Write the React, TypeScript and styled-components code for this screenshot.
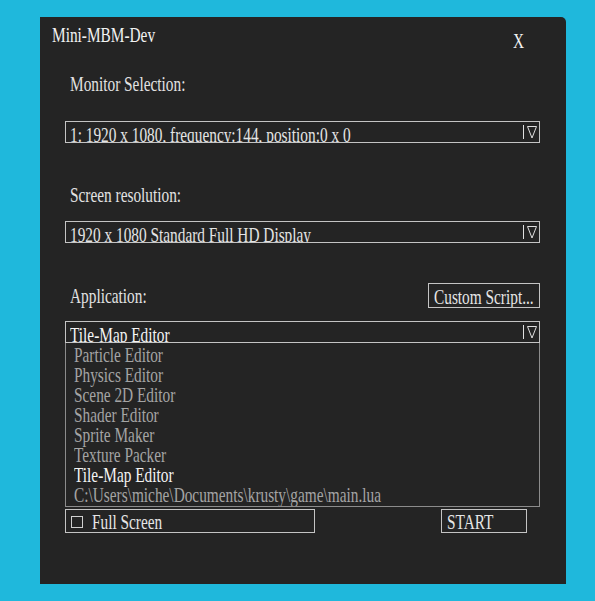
import styled, { createGlobalStyle } from 'styled-components'

const apps = [
  'Particle Editor',
  'Physics Editor',
  'Scene 2D Editor',
  'Shader Editor',
  'Sprite Maker',
  'Texture Packer',
  'Tile-Map Editor',
  'C:\\Users\\miche\\Documents\\krusty\\game\\main.lua',
]
const selectedApp = 'Tile-Map Editor'

const serif = `"Liberation Serif", "Times New Roman", Times, "DejaVu Serif", serif`

function DropArrow() {
  return (
    <Arrow width="15" height="15" viewBox="0 0 15 15">
      <line x1="0.5" y1="0" x2="0.5" y2="14" stroke="#e0e0e0" strokeWidth="1" />
      <polygon points="4.5,1.5 13.5,1.5 9,13" fill="none" stroke="#e0e0e0" strokeWidth="1" />
    </Arrow>
  )
}

export default function App() {
  return (
    <>
      <GlobalStyle />
      <Page>
        <Window>
          <Header>
            <Title>
              <Narrow>Mini-MBM-Dev</Narrow>
            </Title>
            <Close>
              <Narrow>X</Narrow>
            </Close>
          </Header>

          <Body>
            <Label $top={21}>
              <Narrow>Monitor Selection:</Narrow>
            </Label>
            <Select $top={26}>
              <SelectText>
                <Narrow>1: 1920 x 1080, frequency:144, position:0 x 0</Narrow>
              </SelectText>
              <DropArrow />
            </Select>

            <Label $top={41}>
              <Narrow>Screen resolution:</Narrow>
            </Label>
            <Select $top={15}>
              <SelectText>
                <Narrow>1920 x 1080 Standard Full HD Display</Narrow>
              </SelectText>
              <DropArrow />
            </Select>

            <AppRow>
              <Label $top={2}>
                <Narrow>Application:</Narrow>
              </Label>
              <Button $width={112}>
                <Narrow>Custom Script...</Narrow>
              </Button>
            </AppRow>
            <Select $top={13}>
              <SelectText $bright>
                <Narrow>{selectedApp}</Narrow>
              </SelectText>
              <DropArrow />
            </Select>
            <List>
              {apps.map((a) => (
                <Item key={a} $selected={a === selectedApp}>
                  <Narrow>{a}</Narrow>
                </Item>
              ))}
            </List>

            <Footer>
              <Toggle>
                <Check />
                <Narrow>Full Screen</Narrow>
              </Toggle>
              <Start>
                <Narrow>START</Narrow>
              </Start>
            </Footer>
          </Body>
        </Window>
      </Page>
    </>
  )
}

const GlobalStyle = createGlobalStyle`
  html, body {
    margin: 0;
    padding: 0;
    background: #1fb8dc;
  }
  body {
    font-family: ${serif};
    font-size: 21px;
    line-height: 22px;
  }
`

const Page = styled.div`
  height: 601px;
  padding: 17px 0 0 40px;
  box-sizing: border-box;
`

const Window = styled.div`
  width: 526px;
  height: 567px;
  background: #242424;
  border-radius: 0 5px 0 0;
  color: #e6e6e6;
  font-family: ${serif};
  display: flex;
  flex-direction: column;
`

// condensed look of the old bitmap UI font
const Narrow = styled.span`
  display: inline-block;
  white-space: nowrap;
  font-family: ${serif};
  transform: scaleX(0.73);
  transform-origin: left center;
`

const Header = styled.div`
  height: 35px;
  box-sizing: border-box;
  padding: 7px 38px 0 12px;
  display: flex;
  justify-content: space-between;
  align-items: flex-start;
`

const Title = styled.div`
  color: #f2f2f2;
`

const Close = styled.div`
  width: 15px;
  margin-top: 6px;
  color: #f2f2f2;
`

const Body = styled.div`
  padding: 0 26px 0 25px;
  display: flex;
  flex-direction: column;
`

const Label = styled.div<{ $top: number }>`
  margin-top: ${(p) => p.$top}px;
  padding-left: 5px;
  height: 22px;
  color: #e2e2e2;
`

const Select = styled.div<{ $top: number }>`
  margin-top: ${(p) => p.$top}px;
  height: 22px;
  box-sizing: border-box;
  border: 1px solid #c4c4c4;
  display: flex;
  align-items: flex-start;
  overflow: hidden;
`

const SelectText = styled.div<{ $bright?: boolean }>`
  flex: 1;
  height: 20px;
  padding: 2px 0 0 4px;
  box-sizing: border-box;
  overflow: hidden;
  color: ${(p) => (p.$bright ? '#f4f4f4' : '#e4e4e4')};
`

const Arrow = styled.svg`
  flex: none;
  margin: 3px 1px 0 0;
`

const AppRow = styled.div`
  margin-top: 40px;
  height: 25px;
  display: flex;
  justify-content: space-between;
  align-items: flex-start;
`

const Button = styled.div<{ $width: number }>`
  width: ${(p) => p.$width}px;
  height: 25px;
  box-sizing: border-box;
  border: 1px solid #c4c4c4;
  padding: 2px 0 0 5px;
  overflow: hidden;
  color: #e6e6e6;
`

const List = styled.div`
  height: 164px;
  box-sizing: border-box;
  border: 1px solid #8c8c8c;
  border-top: none;
  padding: 2px 0 0 8px;
  overflow: hidden;
`

const Item = styled.div<{ $selected: boolean }>`
  height: 20px;
  line-height: 20px;
  color: ${(p) => (p.$selected ? '#f4f4f4' : '#a4a4a4')};
`

const Footer = styled.div`
  margin-top: 2px;
  height: 24px;
  display: flex;
  justify-content: space-between;
  padding-right: 13px;
`

const Toggle = styled.div`
  width: 250px;
  height: 24px;
  box-sizing: border-box;
  border: 1px solid #c4c4c4;
  padding: 1px 0 0 5px;
  display: flex;
  align-items: flex-start;
  overflow: hidden;
  color: #e6e6e6;
`

const Check = styled.span`
  flex: none;
  width: 12px;
  height: 12px;
  box-sizing: border-box;
  border: 1px solid #d0d0d0;
  margin: 5px 9px 0 0;
`

const Start = styled.div`
  width: 86px;
  height: 24px;
  box-sizing: border-box;
  border: 1px solid #c4c4c4;
  padding: 1px 0 0 5px;
  overflow: hidden;
  color: #e6e6e6;
`
